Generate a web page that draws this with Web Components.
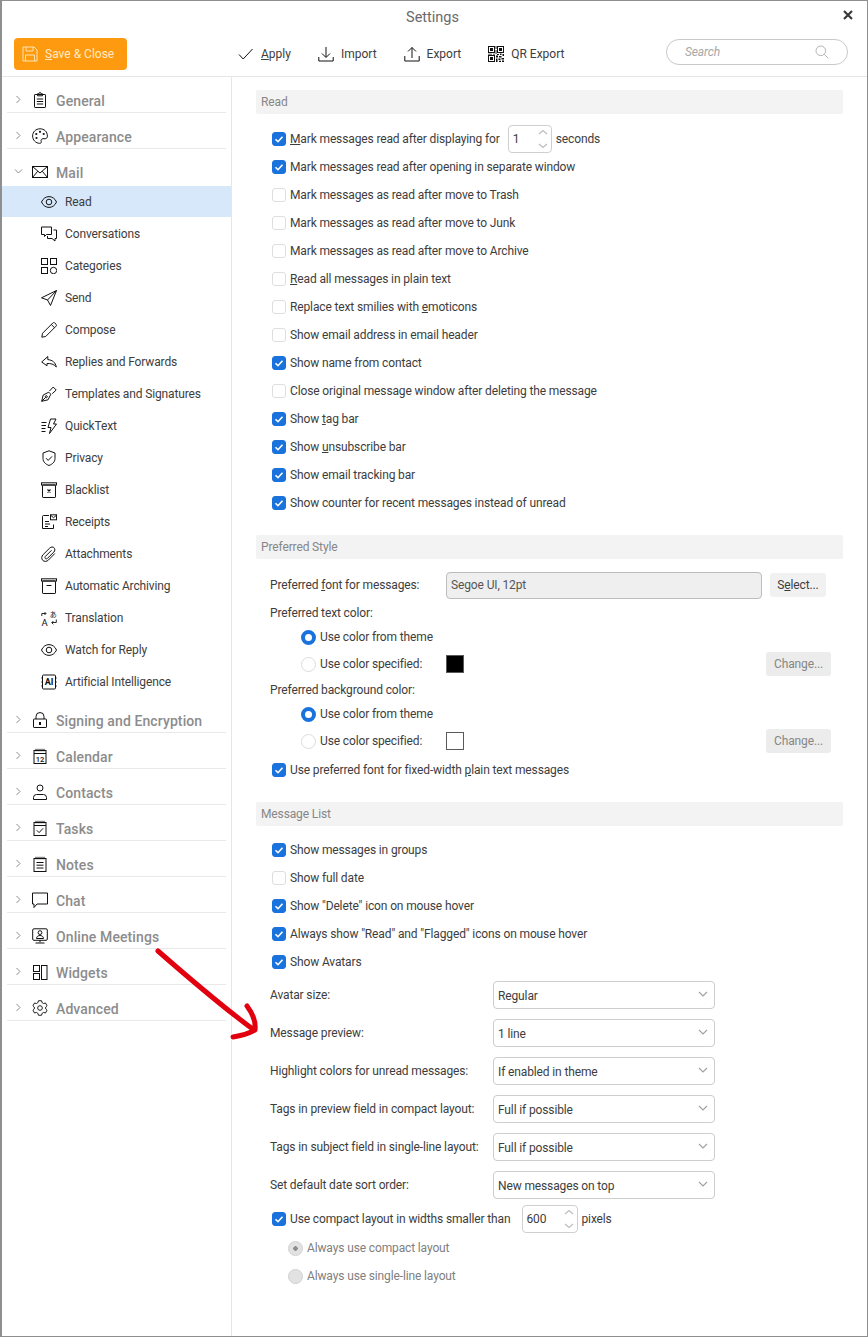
<!DOCTYPE html>
<html>
<head>
<meta charset="utf-8">
<title>Settings</title>
<style>
    html, body { margin: 0; padding: 0; background: #fff; }
    body { font-family: Roboto, "Liberation Sans", sans-serif; font-size: 12px; letter-spacing: -0.13px; color: #3d3d3d; }
</style>
</head>
<body>
<settings-window>
    <span slot="title">Settings</span>

    <save-button slot="toolbar"><u>S</u>ave &amp; Close</save-button>
    <tool-button slot="toolbar" icon="apply" style="margin-left:111px"><u>A</u>pply</tool-button>
    <tool-button slot="toolbar" icon="import">Import</tool-button>
    <tool-button slot="toolbar" icon="export">Export</tool-button>
    <tool-button slot="toolbar" icon="qr">QR Export</tool-button>
    <search-box slot="toolbar"></search-box>

    <nav-group slot="sidebar" icon="general" label="General"></nav-group>
    <nav-group slot="sidebar" icon="appearance" label="Appearance"></nav-group>
    <nav-group slot="sidebar" icon="mail" label="Mail" open>
        <nav-item icon="eye" active>Read</nav-item>
        <nav-item icon="conversations">Conversations</nav-item>
        <nav-item icon="categories">Categories</nav-item>
        <nav-item icon="send">Send</nav-item>
        <nav-item icon="compose">Compose</nav-item>
        <nav-item icon="replies">Replies and Forwards</nav-item>
        <nav-item icon="templates">Templates and Signatures</nav-item>
        <nav-item icon="quicktext">QuickText</nav-item>
        <nav-item icon="privacy">Privacy</nav-item>
        <nav-item icon="blacklist">Blacklist</nav-item>
        <nav-item icon="receipts">Receipts</nav-item>
        <nav-item icon="attachments">Attachments</nav-item>
        <nav-item icon="archiving">Automatic Archiving</nav-item>
        <nav-item icon="translation">Translation</nav-item>
        <nav-item icon="eye">Watch for Reply</nav-item>
        <nav-item icon="ai">Artificial Intelligence</nav-item>
    </nav-group>
    <nav-group slot="sidebar" icon="lock" label="Signing and Encryption"></nav-group>
    <nav-group slot="sidebar" icon="calendar" label="Calendar"></nav-group>
    <nav-group slot="sidebar" icon="contacts" label="Contacts"></nav-group>
    <nav-group slot="sidebar" icon="tasks" label="Tasks"></nav-group>
    <nav-group slot="sidebar" icon="notes" label="Notes"></nav-group>
    <nav-group slot="sidebar" icon="chat" label="Chat"></nav-group>
    <nav-group slot="sidebar" icon="meetings" label="Online Meetings"></nav-group>
    <nav-group slot="sidebar" icon="widgets" label="Widgets"></nav-group>
    <nav-group slot="sidebar" icon="advanced" label="Advanced"></nav-group>

    <form-section label="Read">
        <check-row checked><u>M</u>ark messages read after displaying for <spin-box slot="after" value="1" width="44"></spin-box><span slot="after">seconds</span></check-row>
        <check-row checked>Mark messages read after opening in separate window</check-row>
        <check-row>Mark messages as read after move to Trash</check-row>
        <check-row>Mark messages as read after move to Junk</check-row>
        <check-row>Mark messages as read after move to Archive</check-row>
        <check-row><u>R</u>ead all messages in plain text</check-row>
        <check-row>Replace text smilies with <u>e</u>moticons</check-row>
        <check-row>Show email address in email header</check-row>
        <check-row checked>Show name from contact</check-row>
        <check-row>Close original message window after deleting the message</check-row>
        <check-row checked>Show <u>t</u>ag bar</check-row>
        <check-row checked>Show <u>u</u>nsubscribe bar</check-row>
        <check-row checked>Show email tracking bar</check-row>
        <check-row checked>Show counter for recent messages instead of unread</check-row>
    </form-section>

    <form-section label="Preferred Style" style="--gap:12px">
        <font-row>Preferred <u>f</u>ont for messages:</font-row>
        <plain-label>Preferred text color:</plain-label>
        <radio-row state="on" indent="45">Use color from theme</radio-row>
        <radio-row state="off" indent="45" swatch="#000" style="margin-top:1px">Use color specified:</radio-row>
        <plain-label>Preferred background color:</plain-label>
        <radio-row state="on" indent="45">Use color from theme</radio-row>
        <radio-row state="off" indent="45" swatch="#fff" style="margin-top:1px">Use color specified:</radio-row>
        <check-row checked style="margin-top:1px">Use preferred font for fixed-width <u>p</u>lain text messages</check-row>
    </form-section>

    <form-section label="Message List" style="--gap:10px">
        <check-row checked>Show messages in groups</check-row>
        <check-row>Show full date</check-row>
        <check-row checked>Show "Delete" icon on mouse hover</check-row>
        <check-row checked>Always show "Read" and "Flagged" icons on mouse hover</check-row>
        <check-row checked>Show Avatars</check-row>
        <select-row value="Regular">Avatar size:</select-row>
        <select-row value="1 line">Message preview:</select-row>
        <select-row value="If enabled in theme">Highlight colors for unread messages:</select-row>
        <select-row value="Full if possible">Tags in preview field in compact layout:</select-row>
        <select-row value="Full if possible">Tags in subject field in single-line layout:</select-row>
        <select-row value="New messages on top">Set default date sort order:</select-row>
        <check-row checked style="margin-top:1px;--after-gap:11px">Use compact layout in widths smaller than <spin-box slot="after" value="600" width="56"></spin-box><span slot="after">pixels</span></check-row>
        <radio-row state="dis-on" indent="32" tall style="margin-top:1px">Always use compact layout</radio-row>
        <radio-row state="dis-off" indent="32" tall>Always use single-line layout</radio-row>
    </form-section>

    <red-arrow slot="overlay"></red-arrow>
</settings-window>

<script>
const ICONS = {
    apply: '<path d="M1 8.500l4.200 4.500L14.500 3"/>',
    import: '<path d="M8 1v10M4 7.500L8 11.500l4-4M.8 11v4h14.400v-4"/>',
    export: '<path d="M8 12V1.500M4 5.500L8 1.500l4 4M.8 10v5h14.400v-5"/>',
    qr: '<g fill="#111" stroke="none"><path d="M0 0h7v7H0zM1 1v5h5V1zM2 2h3v3H2z" fill-rule="evenodd"/><path d="M9 0h7v7H9zM10 1v5h5V1zM11 2h3v3h-3z" fill-rule="evenodd"/><path d="M0 9h7v7H0zM1 10v5h5v-5zM2 11h3v3H2z" fill-rule="evenodd"/><path d="M7.600 0h.9v3h-.9zM7.600 4h.9v4h-.9zM0 7.700h4v.8H0zM5 7.700h2v.8H5zM9 8h2v1H9zM12 7.600h1.500v1.400H12zM14.500 8H16v2h-1.500zM8 9.500h2v2H8zM11 10h2.500v1.500H11zM8 12.500h1.500V16H8zM10.500 12.500h2v1.500h-2zM13.500 12h2.500v1.500h-2.500zM11 14.700h2V16h-2zM14 14.500h2V16h-2z"/></g>',
    general: '<rect x="2.500" y="2.500" width="11" height="13" rx=".6"/><path d="M5.500 3.800V1.800h1.300a1.200 1.200 0 0 1 2.400 0h1.300v2zM4.800 7h6.400M4.800 9.500h6.400M4.800 12h6.400"/>',
    appearance: '<path d="M8 .8C3.800.8.6 4 .6 8s3.200 7.300 7 7.300c1.600 0 2-1 1.600-2-.5-1.200.2-2.600 1.800-2.600h2.200c1.400 0 2.200-1 2.200-2.500C15.400 3.600 12.200.8 8 .8z"/><g fill="#111" stroke="none"><circle cx="4.300" cy="6" r="1.100"/><circle cx="8" cy="3.800" r="1.100"/><circle cx="11.700" cy="6" r="1.100"/><circle cx="4.500" cy="10" r="1.100"/></g>',
    mail: '<rect x=".5" y="2.500" width="15" height="11"/><path d="M.5 2.500L8 9l7.500-6.500M.5 13.500l5.300-6.300M15.500 13.500l-5.300-6.300"/>',
    eye: '<path d="M.5 8C3.500 .8 12.500 .8 15.500 8 12.500 15.200 3.500 15.200 .5 8z"/><circle cx="8" cy="8" r="2.800"/>',
    conversations: '<path d="M.5 1h10v7.500H5.500L3.500 10.500v-2h-3z"/><path d="M12.500 4h3v8.500H14V15l-3-2.500H6.500V10"/>',
    categories: '<rect x=".5" y=".5" width="6" height="6"/><rect x="9.500" y=".5" width="6" height="6"/><rect x=".5" y="9.500" width="6" height="6"/><circle cx="12.500" cy="12.500" r="3.200"/>',
    send: '<path d="M15.500.5L.5 7.800l6 2.200L9.500 15.500zM6.500 10L15.500.5"/>',
    compose: '<path d="M.8 15.200l.7-3.900L11.800 1c.6-.6 1.400-.6 2 0l1.200 1.200c.6.6.6 1.400 0 2L4.700 14.500zM10.300 2.500l3.200 3.200"/>',
    replies: '<path d="M6.800 2.500L.7 8l5.300 3.800V9.500c3.500-.2 7 .6 9.300 3.500C14.500 8.500 11.500 6 6.800 5.600z"/>',
    templates: '<path d="M.7 15.300L2.200 9 7.800 6.200l2 2L7 13.800zM.7 15.300l3.800-3.800"/><circle cx="5.300" cy="10.700" r="1"/><path d="M8.500 5l3.700-4 3 3-4 3.700"/>',
    quicktext: '<path d="M.5 4.500h5M.5 7.500h4.500M.5 10.500h4M.5 13.500h4M9.500 1H15l-2.500 5H15.500L8.500 15.500 10 9.500H7z"/>',
    privacy: '<path d="M8 .8l6 2.200v5.500c0 3.500-2.800 5.800-6 7-3.200-1.200-6-3.500-6-7V3z"/><path d="M5 8.200l2.200 2.200 3.800-4"/>',
    blacklist: '<rect x=".5" y=".8" width="15" height="2.200"/><rect x="1.500" y="3" width="13" height="12.500" rx=".6"/><path d="M6.500 7.500l3 3M9.500 7.500l-3 3" stroke-width="1.200"/>',
    receipts: '<path d="M8 1.500H2.500a1 1 0 0 0-1 1v12h11V10.500M4 7.500h4M4 10h5M4 12.500h3"/><rect x="9.500" y=".8" width="6" height="5"/><path d="M9.500 1.200l3 2.500 3-2.500"/>',
    attachments: '<path d="M13.800 7.500L7.500 14c-1.800 1.800-4.400 1.800-5.800.3S.3 10.400 2.200 8.500L8.800 2c1.300-1.300 3.300-1.300 4.300-.2s1 2.900-.2 4.200L6.500 12.300c-.7.700-1.700.7-2.200.2s-.5-1.500.2-2.200l6-6"/>',
    archiving: '<rect x=".5" y=".8" width="15" height="2.200"/><rect x="1.500" y="3" width="13" height="12.500" rx=".6"/><path d="M5.500 7.500h5"/>',
    translation: '<path d="M.8 6V3.500h4M3.500 2l1.500 1.500L3.500 5M15.300 9.500v3h-4.500M12.300 11l-1.500 1.800 1.500 1.500" stroke-width=".9"/><text x="8.700" y="7" font-size="7" font-family="Noto Sans CJK JP" fill="#111" stroke="none">あ</text><text x=".5" y="15.500" font-size="9.500" font-family="Roboto" fill="#111" stroke="none">A</text>',
    ai: '<rect x="1.500" y="1" width="13" height="14" rx="1"/><path d="M.3 4h1.200M.3 8h1.200M.3 12h1.200M14.500 4h1.200M14.500 8h1.200M14.500 12h1.200"/><text x="8" y="11.200" text-anchor="middle" font-size="9" font-weight="700" font-family="Roboto" fill="#111" stroke="none">AI</text>',
    lock: '<rect x="1.500" y="7" width="13" height="8.500" rx=".6"/><path d="M4 7V4.500a4 4 0 0 1 8 0V7"/><rect x="7" y="10" width="2" height="3" fill="#111" stroke="none"/>',
    calendar: '<rect x="2" y="2.500" width="12" height="13"/><path d="M2 5.500h12M4 .8v2.500M6 .8v2.500M8 .8v2.500M10 .8v2.500M12 .8v2.500"/><text x="8" y="13.700" text-anchor="middle" font-size="7.500" font-family="Roboto" fill="#111" stroke="none">12</text>',
    contacts: '<circle cx="8" cy="4" r="3"/><path d="M1.500 15.500v-2a3 3 0 0 1 3-3h7a3 3 0 0 1 3 3v2z"/>',
    tasks: '<rect x="2" y="2.500" width="12" height="13"/><path d="M2 5.500h12M4 .8v2.500M6 .8v2.500M8 .8v2.500M10 .8v2.500M12 .8v2.500M4.800 10.300l2.300 2.300 4-4.300"/>',
    notes: '<rect x="2" y="2.500" width="12" height="13"/><path d="M4 .8v2.500M6 .8v2.500M8 .8v2.500M10 .8v2.500M12 .8v2.500M4.500 6.500h7M4.500 9.200h7M4.500 12h7"/>',
    chat: '<path d="M.5 1h15v11H5L2 15.500V12H.5z"/>',
    meetings: '<rect x=".7" y=".8" width="14.600" height="11.500" rx="1.200"/><circle cx="8" cy="4.600" r="1.900"/><path d="M4.500 10.500c0-4 7-4 7 0zM8 12.300v2M3.500 15h9"/>',
    widgets: '<rect x="1.500" y="1.500" width="6" height="6"/><rect x="1.500" y="9.500" width="6" height="6"/><rect x="9.500" y="1.500" width="5.500" height="14"/>',
    advanced: '<path d="M6.300.8h3.400l.5 2 1.700 1 2-.6 1.700 3-1.500 1.400v2l1.500 1.400-1.700 3-2-.6-1.700 1-.5 2H6.300l-.5-2-1.700-1-2 .6-1.700-3 1.500-1.400v-2L.4 6.200l1.700-3 2 .6 1.700-1z"/><circle cx="8" cy="8.600" r="2.500"/>',
    save: '<path d="M1 1h11l3 3v11H1z"/><path d="M4 1v4h7V1M3.500 15V9h9v6"/>'
};

class UiIcon extends HTMLElement {
    connectedCallback() {
        const size = this.getAttribute('size') || 16;
        const colour = this.getAttribute('colour') || '#111';
        const box = this.getAttribute('name') === 'advanced' ? '0 0 16 17.200' : '0 0 16 16';
        this.attachShadow({ mode: 'open' }).innerHTML = `
            <style>
                :host { display: inline-flex; flex: none; width: ${size}px; height: ${size}px; }
                svg { width: 100%; height: 100%; fill: none; stroke: ${colour}; stroke-width: 1; display: block; letter-spacing: 0; }
            </style>
            <svg viewBox="${box}">${ICONS[this.getAttribute('name')] || ''}</svg>
        `;
    }
}

class SettingsWindow extends HTMLElement {
    constructor() {
        super();
        this.attachShadow({ mode: 'open' }).innerHTML = `
            <style>
                :host {
                    display: flex;
                    flex-direction: column;
                    position: relative;
                    box-sizing: border-box;
                    width: 868px;
                    height: 1337px;
                    overflow: hidden;
                    border: 1px solid #8f8f8f;
                    border-left-width: 2px;
                    background: #fff;
                }
                .title {
                    display: grid;
                    grid-template-columns: 1fr auto 1fr;
                    align-items: center;
                    box-sizing: border-box;
                    height: 30px;
                    padding: 2px 4px 0 0;
                    flex: none;
                    font-size: 14.500px;
                    letter-spacing: 0;
                    color: #6a6a6a;
                }
                .title svg { justify-self: end; margin: -4px 10px 0 0; width: 10px; height: 10px; }
                .toolbar {
                    display: flex;
                    align-items: center;
                    gap: 27px;
                    flex: none;
                    height: 45px;
                    padding-left: 12px;
                    padding-right: 19px;
                    border-bottom: 1px solid #e6e6e6;
                }
                .body { display: flex; flex: 1; min-height: 0; }
                aside {
                    width: 229px;
                    flex: none;
                    border-right: 1px solid #e6e6e6;
                }
                main { flex: 1; padding: 13px 24px 0 24px; }
            </style>
            <div class="title">
                <span></span>
                <slot name="title"></slot>
                <svg viewBox="0 0 10 10"><path d="M1 1l8 8M9 1l-8 8" stroke="#3a3a3a" stroke-width="2.200"/></svg>
            </div>
            <div class="toolbar"><slot name="toolbar"></slot></div>
            <div class="body">
                <aside><slot name="sidebar"></slot></aside>
                <main><slot></slot></main>
            </div>
            <slot name="overlay"></slot>
        `;
    }
}

class SaveButton extends HTMLElement {
    constructor() {
        super();
        this.attachShadow({ mode: 'open' }).innerHTML = `
            <style>
                :host {
                    display: flex;
                    align-items: center;
                    gap: 7px;
                    box-sizing: border-box;
                    width: 113px;
                    height: 32px;
                    padding-left: 8px;
                    margin-top: 1px;
                    margin-right: -27px;
                    border-radius: 4px;
                    background: #fd9a10;
                    color: #ffe9c4;
                    font-size: 12px;
                    letter-spacing: 0;
                    flex: none;
                }
            </style>
            <ui-icon name="save" colour="#ffe4ae"></ui-icon><span><slot></slot></span>
        `;
    }
}

class ToolButton extends HTMLElement {
    connectedCallback() {
        this.attachShadow({ mode: 'open' }).innerHTML = `
            <style>
                :host { display: flex; align-items: center; gap: 7px; height: 24px; font-size: 12px; letter-spacing: 0; flex: none; margin-top: 1px; }
            </style>
            <ui-icon name="${this.getAttribute('icon')}"></ui-icon><span><slot></slot></span>
        `;
    }
}

class SearchBox extends HTMLElement {
    constructor() {
        super();
        this.attachShadow({ mode: 'open' }).innerHTML = `
            <style>
                :host {
                    display: flex;
                    align-items: center;
                    justify-content: space-between;
                    box-sizing: border-box;
                    width: 182px;
                    height: 26px;
                    margin-left: auto;
                    margin-top: -4px;
                    padding: 0 18px 0 18px;
                    border: 1px solid #c9c9c9;
                    border-radius: 14px;
                    color: #a8a8a8;
                    font-style: italic;
                }
                svg { width: 14px; height: 14px; fill: none; stroke: #b5b5b5; stroke-width: 1; }
            </style>
            <span>Search</span>
            <svg viewBox="0 0 14 14"><circle cx="5.800" cy="5.800" r="4.800"/><path d="M9.300 9.300l4 4"/></svg>
        `;
    }
}

class NavGroup extends HTMLElement {
    connectedCallback() {
        const open = this.hasAttribute('open');
        const chevron = open ? 'M1 2.500l3.500 3.500L8 2.500' : 'M2.500 1L6 4.500 2.500 8';
        this.attachShadow({ mode: 'open' }).innerHTML = `
            <style>
                :host { display: block; padding-top: 12px; }
                .head {
                    display: flex;
                    align-items: center;
                    box-sizing: border-box;
                    height: 24px;
                    margin: 0 5px 0 5px;
                    padding-left: 7px;
                    ${open ? '' : 'border-bottom: 1px solid #e9e9e9;'}
                    color: #8c8c8c;
                    font-size: 14px;
                    font-weight: 500;
                    letter-spacing: 0.1px;
                }
                .chev { width: 9px; height: 9px; margin-right: 9px; margin-top: -3px; fill: none; stroke: #8d8d8d; }
                ui-icon { margin-right: 8px; margin-top: -2px; }
            </style>
            <div class="head">
                <svg class="chev" viewBox="0 0 9 9"><path d="${chevron}"/></svg>
                <ui-icon name="${this.getAttribute('icon')}"></ui-icon>
                <span>${this.getAttribute('label')}</span>
            </div>
            <slot></slot>
        `;
    }
}

class NavItem extends HTMLElement {
    connectedCallback() {
        const active = this.hasAttribute('active');
        this.attachShadow({ mode: 'open' }).innerHTML = `
            <style>
                :host {
                    display: flex;
                    align-items: center;
                    gap: 8px;
                    box-sizing: border-box;
                    height: 32px;
                    padding-top: 1px;
                    padding-left: 39px;
                    border-top: 1px solid transparent;
                    background-clip: padding-box;
                    font-size: 12px;
                    ${active ? 'background-color: #d7e8fa;' : ''}
                }
            </style>
            <ui-icon name="${this.getAttribute('icon')}"></ui-icon><span><slot></slot></span>
        `;
    }
}

class FormSection extends HTMLElement {
    connectedCallback() {
        this.attachShadow({ mode: 'open' }).innerHTML = `
            <style>
                :host { display: block; margin-bottom: 18px; }
                .head {
                    display: flex;
                    align-items: center;
                    height: 24px;
                    padding-left: 5px;
                    margin-bottom: var(--gap, 11px);
                    background: #f3f3f3;
                    border-radius: 2px;
                    color: #868686;
                }
            </style>
            <div class="head">${this.getAttribute('label')}</div>
            <slot></slot>
        `;
    }
}

class CheckRow extends HTMLElement {
    connectedCallback() {
        const checked = this.hasAttribute('checked');
        this.attachShadow({ mode: 'open' }).innerHTML = `
            <style>
                :host { display: flex; align-items: center; height: 28px; padding-left: 16px; }
                .box {
                    box-sizing: border-box;
                    width: 14px;
                    height: 14px;
                    margin-right: 4px;
                    flex: none;
                    border-radius: 3px;
                    border: 1px solid ${checked ? '#1a73dd' : '#dedede'};
                    background: ${checked ? '#1a73dd' : '#fff'};
                }
                .box svg { display: block; width: 12px; height: 12px; fill: none; stroke: #fff; stroke-width: 1.600; }
                .after { display: flex; align-items: center; gap: 4px; margin-left: var(--after-gap, 8px); }
            </style>
            <div class="box">${checked ? '<svg viewBox="0 0 12 12"><path d="M2.500 6.200l2.500 2.500 4.500-5"/></svg>' : ''}</div>
            <span><slot></slot></span>
            <div class="after"><slot name="after"></slot></div>
        `;
    }
}

class SpinBox extends HTMLElement {
    connectedCallback() {
        this.attachShadow({ mode: 'open' }).innerHTML = `
            <style>
                :host {
                    display: flex;
                    align-items: center;
                    justify-content: space-between;
                    box-sizing: border-box;
                    width: ${this.getAttribute('width')}px;
                    height: 28px;
                    padding: 0 3px 0 4px;
                    border: 1px solid #cfcfcf;
                    border-radius: 4px;
                    background: #fff;
                }
                svg { width: 10px; height: 20px; fill: none; stroke: #bdbdbd; stroke-width: 1.200; }
            </style>
            <span>${this.getAttribute('value')}</span>
            <svg viewBox="0 0 10 20"><path d="M1 5l4-3.500L9 5M1 15l4 3.500L9 15"/></svg>
        `;
    }
}

class FontRow extends HTMLElement {
    constructor() {
        super();
        this.attachShadow({ mode: 'open' }).innerHTML = `
            <style>
                :host { display: flex; align-items: center; height: 28px; padding-left: 14px; }
                .label { width: 176px; flex: none; }
                .field {
                    display: flex;
                    align-items: center;
                    box-sizing: border-box;
                    width: 316px;
                    height: 27px;
                    padding-left: 4px;
                    border: 1px solid #bcbcbc;
                    border-radius: 4px;
                    background: #efefef;
                    color: #555;
                }
                push-button { margin-left: 8px; }
            </style>
            <span class="label"><slot></slot></span>
            <div class="field">Segoe UI, 12pt</div>
            <push-button width="56">S<u>e</u>lect...</push-button>
        `;
    }
}

class PushButton extends HTMLElement {
    connectedCallback() {
        const off = this.hasAttribute('disabled');
        this.attachShadow({ mode: 'open' }).innerHTML = `
            <style>
                :host {
                    display: flex;
                    align-items: center;
                    justify-content: center;
                    box-sizing: border-box;
                    width: ${this.getAttribute('width')}px;
                    height: 24px;
                    border-radius: 3px;
                    background: ${off ? '#ececec' : '#f1f1f1'};
                    color: ${off ? '#868686' : '#3d3d3d'};
                    flex: none;
                }
            </style>
            <span><slot></slot></span>
        `;
    }
}

class PlainLabel extends HTMLElement {
    constructor() {
        super();
        this.attachShadow({ mode: 'open' }).innerHTML = `
            <style>
                :host { display: flex; align-items: center; height: 24px; padding-left: 14px; }
                :host(:first-of-type) { margin-top: 2px; }
            </style>
            <span><slot></slot></span>
        `;
    }
}

class RadioRow extends HTMLElement {
    connectedCallback() {
        const state = this.getAttribute('state');
        const swatch = this.getAttribute('swatch');
        const faded = state.startsWith('dis');
        const mark = {
            on: 'border: 4px solid #1a73dd; background: #fff;',
            off: 'border: 1px solid #dcdcdc; background: #fff;',
            'dis-on': 'border: 1px solid #d0d0d0; background: radial-gradient(circle, #8d8d8d 0 2px, #e2e2e2 2.500px);',
            'dis-off': 'border: 1px solid #d0d0d0; background: #e2e2e2;'
        }[state];
        this.attachShadow({ mode: 'open' }).innerHTML = `
            <style>
                :host {
                    display: flex;
                    align-items: center;
                    height: ${this.hasAttribute('tall') ? 28 : swatch ? 28 : 24}px;
                    padding-left: ${this.getAttribute('indent')}px;
                    padding-right: 12px;
                    ${faded ? 'color: #808080;' : ''}
                }
                .dot { box-sizing: border-box; width: 15px; height: 15px; margin-right: 4px; border-radius: 50%; flex: none; ${mark} }
                .text { ${swatch ? 'width: 126px; flex: none;' : ''} }
                .swatch { box-sizing: border-box; width: 18px; height: 18px; border: 1px solid #5a5a5a; background: ${swatch}; }
                push-button { margin-left: auto; }
            </style>
            <div class="dot"></div>
            <span class="text"><slot></slot></span>
            ${swatch ? '<div class="swatch"></div><push-button disabled width="65">Change...</push-button>' : ''}
        `;
    }
}

class SelectRow extends HTMLElement {
    connectedCallback() {
        this.attachShadow({ mode: 'open' }).innerHTML = `
            <style>
                :host { display: flex; align-items: center; height: 38px; padding-left: 14px; }
                .label { width: 223px; flex: none; }
                .select {
                    display: flex;
                    align-items: center;
                    justify-content: space-between;
                    box-sizing: border-box;
                    width: 222px;
                    height: 28px;
                    padding: 1px 6px 0 4px;
                    border: 1px solid #cdcdcd;
                    border-radius: 4px;
                }
                svg { width: 10px; height: 6px; fill: none; stroke: #a0a0a0; stroke-width: 1.100; margin-top: -3px; }
            </style>
            <span class="label"><slot></slot></span>
            <div class="select"><span>${this.getAttribute('value')}</span><svg viewBox="0 0 10 6"><path d="M1 1l4 4 4-4"/></svg></div>
        `;
    }
}

class RedArrow extends HTMLElement {
    constructor() {
        super();
        this.attachShadow({ mode: 'open' }).innerHTML = `
            <style>
                :host { position: absolute; left: -2px; top: -1px; width: 868px; height: 1337px; pointer-events: none; }
                svg { width: 100%; height: 100%; fill: none; stroke: #e2000f; stroke-width: 5; stroke-linecap: round; stroke-linejoin: round; }
            </style>
            <svg viewBox="0 0 868 1337"><path d="M158 951C190 979 224 1008 254 1030M247 1006C253 1014 256 1022 255 1030 248 1034 240 1036 233 1037"/></svg>
        `;
    }
}

customElements.define('ui-icon', UiIcon);
customElements.define('settings-window', SettingsWindow);
customElements.define('save-button', SaveButton);
customElements.define('tool-button', ToolButton);
customElements.define('search-box', SearchBox);
customElements.define('nav-group', NavGroup);
customElements.define('nav-item', NavItem);
customElements.define('form-section', FormSection);
customElements.define('check-row', CheckRow);
customElements.define('spin-box', SpinBox);
customElements.define('font-row', FontRow);
customElements.define('push-button', PushButton);
customElements.define('plain-label', PlainLabel);
customElements.define('radio-row', RadioRow);
customElements.define('select-row', SelectRow);
customElements.define('red-arrow', RedArrow);
</script>
</body>
</html>
